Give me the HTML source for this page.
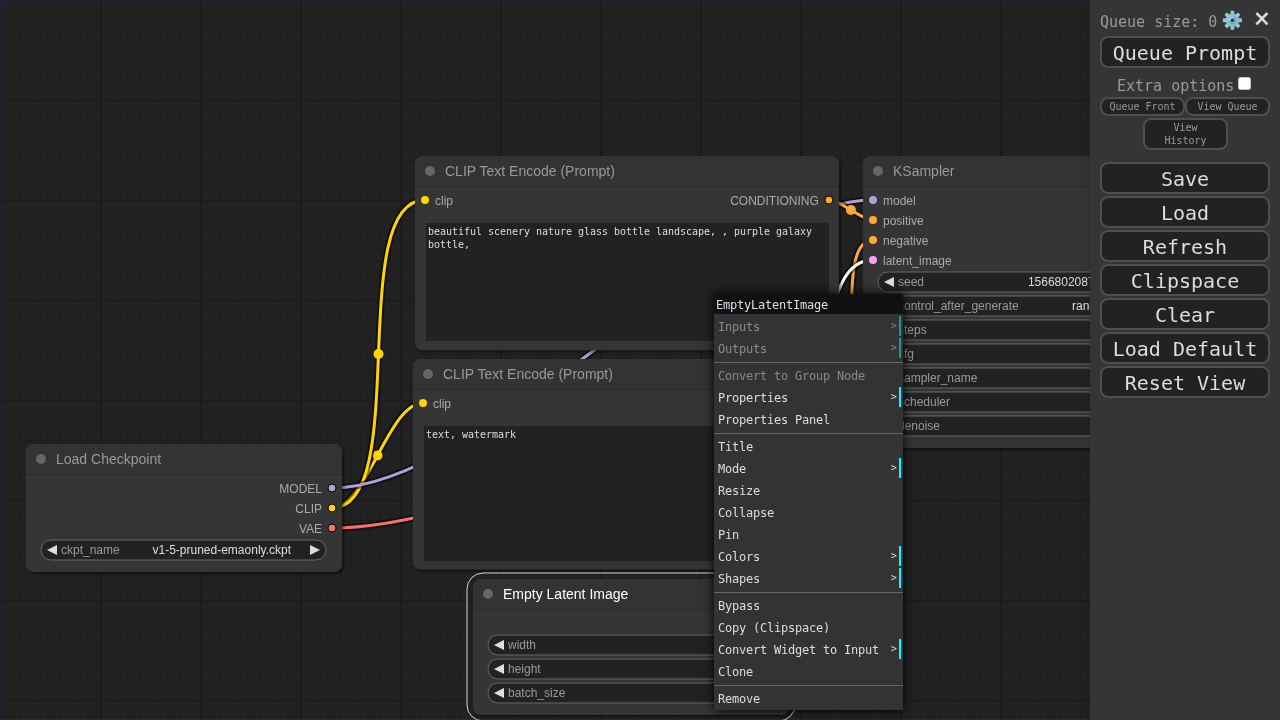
<!DOCTYPE html><html lang="en"><head><meta charset="utf-8"><title>ComfyUI</title><style>
*{box-sizing:border-box}
html,body{margin:0;padding:0;width:1280px;height:720px;overflow:hidden;background:#222222}
body{position:relative;font-family:"Liberation Sans", Arial, sans-serif}
#app{position:absolute;left:0;top:0;width:1280px;height:720px;overflow:hidden;will-change:transform}
.cv{position:absolute;left:0;top:0;display:block}
.ta{position:absolute;background:#222222;color:#dddddd;font-family:"DejaVu Sans Mono", "Liberation Mono", monospace;font-size:10px;line-height:13px;padding:2px;white-space:pre-wrap;overflow:hidden;letter-spacing:-0.02px}
.menu{position:absolute;left:1090px;top:0;width:190px;height:720px;background:#353535;color:#999999;font-family:"DejaVu Sans Mono", "Liberation Mono", monospace;font-size:15px;box-shadow:3px 3px 8px rgba(0,0,0,0.4)}
.menu>*{position:absolute}
.menu .qs{left:10px;top:12px;line-height:20px;white-space:pre}
.menu .gear{left:131px;top:9px}
.menu .close{left:164px;top:-3px;width:16px;font-size:27px;line-height:44px;color:#dddddd;font-family:"Liberation Sans", Arial, sans-serif;text-align:center;-webkit-text-stroke:0.5px #dddddd}
.btn{left:10px;width:170px;height:32px;background:#222222;border:2px solid #4e4e4e;border-radius:8px;color:#dddddd;font-size:20px;line-height:28px;text-align:center;padding:1px 0 0 0;white-space:pre}
.menu .xo{left:27px;top:76px;line-height:20px;white-space:pre}
.menu .cb{left:148px;top:77px;width:13px;height:13px;background:#fff;border:1px solid #c4c4c4;border-radius:2.5px}
.sbtn{width:85px;height:19px;background:#222222;border:2px solid #4e4e4e;border-radius:8px;color:#999999;font-size:10px;line-height:15px;text-align:center;padding:0;white-space:pre}
.sbtn.h{height:32px;line-height:13px;white-space:normal;padding:1px 6px 0 6px}
.ctx{position:absolute;left:714px;top:294px;width:189px;height:416px;background:#333333;color:#dddddd;font-family:"DejaVu Sans Mono", "Liberation Mono", monospace;font-size:12px;box-shadow:0 0 10px #000}
.ctx .t{height:20px;line-height:20px;padding:1px 2px 0 2px;letter-spacing:-0.22px;background:#111111;color:#ddddee;white-space:pre}
.ctx .e{position:relative;height:20px;line-height:20px;margin:2px 2px 0 2px;padding:1px 0 0 2px;letter-spacing:-0.22px;white-space:pre}
.ctx .e.sub{border-right:2px solid cyan}
.ctx .e.sub::after{content:">";position:absolute;top:-1px;right:2px;letter-spacing:0;font-size:10.3px}
.ctx .e.dis{opacity:0.5}
.ctx .sep{height:2px;margin:3px 0 0 0;border-top:1px solid #333333;border-bottom:1px solid #666666}
</style></head><body><div id="app">
<svg class="cv" width="1280" height="720" viewBox="0 0 1280 720">
<defs>
<pattern id="grid" width="100" height="100" patternUnits="userSpaceOnUse">
<rect width="100" height="100" fill="#222222"/>
<path d="M10.5 0V100M20.5 0V100M30.5 0V100M40.5 0V100M50.5 0V100M60.5 0V100M70.5 0V100M80.5 0V100M90.5 0V100M0 10.5H100M0 20.5H100M0 30.5H100M0 40.5H100M0 50.5H100M0 60.5H100M0 70.5H100M0 80.5H100M0 90.5H100" stroke="#1d1d1d" stroke-width="1" fill="none"/>
<path d="M1 0V100" stroke="#1b1b1b" stroke-width="2" fill="none"/><path d="M0 0.5H100" stroke="#1b1b1b" stroke-width="1" fill="none"/><path d="M0 1.5H100" stroke="#1f1f1f" stroke-width="1" fill="none"/>
</pattern>
<filter id="sh" x="-10%" y="-10%" width="125%" height="125%"><feDropShadow dx="2" dy="2" stdDeviation="1.5" flood-color="#000" flood-opacity="0.5"/></filter>
</defs>
<rect width="1280" height="720" fill="url(#grid)"/>
<rect x="0" y="0" width="1280" height="720" fill="none" stroke="#223355" stroke-width="1"/>
<g fill="none" stroke-linecap="butt">
<path d="M332 508C366.74 508 388.26 403 423 403" stroke="rgba(0,0,0,0.5)" stroke-width="7"/><path d="M332 508C366.74 508 388.26 403 423 403" stroke="#FFD500" stroke-width="3"/><circle cx="377.5" cy="455.5" r="5" fill="#FFD500"/>
<path d="M332 508C412.43 508 344.57 200 425 200" stroke="rgba(0,0,0,0.5)" stroke-width="7"/><path d="M332 508C412.43 508 344.57 200 425 200" stroke="#FFD500" stroke-width="3"/><circle cx="378.5" cy="354" r="5" fill="#FFD500"/>
<path d="M332 488C485.22 488 719.78 200 873 200" stroke="rgba(0,0,0,0.5)" stroke-width="7"/><path d="M332 488C485.22 488 719.78 200 873 200" stroke="#B39DDB" stroke-width="3"/><circle cx="602.5" cy="344" r="5" fill="#B39DDB"/>
<path d="M828.85 200C840.96 200 860.88 220 873 220" stroke="rgba(0,0,0,0.5)" stroke-width="7"/><path d="M828.85 200C840.96 200 860.88 220 873 220" stroke="#FFA931" stroke-width="3"/><circle cx="850.92" cy="210" r="5" fill="#FFA931"/>
<path d="M829.28 403C871.47 403 830.81 240 873 240" stroke="rgba(0,0,0,0.5)" stroke-width="7"/><path d="M829.28 403C871.47 403 830.81 240 873 240" stroke="#FFA931" stroke-width="3"/><circle cx="851.14" cy="321.5" r="5" fill="#FFA931"/>
<path d="M779 623C872.74 623 779.26 260 873 260" stroke="rgba(0,0,0,0.5)" stroke-width="7"/><path d="M779 623C872.74 623 779.26 260 873 260" stroke="#FFFFFF" stroke-width="3"/><circle cx="826" cy="441.5" r="5" fill="#FFFFFF"/>
<path d="M1169 200C1181.51 200 1206.49 202 1219 202" stroke="rgba(0,0,0,0.5)" stroke-width="7"/><path d="M1169 200C1181.51 200 1206.49 202 1219 202" stroke="#FF9CF9" stroke-width="3"/><circle cx="1194" cy="201" r="5" fill="#FF9CF9"/>
<path d="M332 528C566.57 528 984.43 222 1219 222" stroke="rgba(0,0,0,0.5)" stroke-width="7"/><path d="M332 528C566.57 528 984.43 222 1219 222" stroke="#FF6E6E" stroke-width="3"/><circle cx="775.5" cy="375" r="5" fill="#FF6E6E"/>
</g>
<g transform="translate(413 389)" font-family='"Liberation Sans", Arial, sans-serif'>
<path d="M8 -30H418.28A8 8 0 0 1 426.28 -22V172.61A8 8 0 0 1 418.28 180.61H8A8 8 0 0 1 0 172.61V-22A8 8 0 0 1 8 -30Z" fill="#353535" filter="url(#sh)"/>
<rect x="0" y="-1" width="426.28" height="2" fill="rgba(0,0,0,0.2)"/>
<path d="M8 -30H418.28A8 8 0 0 1 426.28 -22V0H0V-22A8 8 0 0 1 8 -30Z" fill="#333333"/>
<circle cx="15" cy="-15" r="5" fill="#666666"/>
<text x="30" y="-10" font-size="14" fill="#999999">CLIP Text Encode (Prompt)</text>
<circle cx="10" cy="14" r="4" fill="#FFD500"/><text x="20" y="19" font-size="12" fill="#AAAAAA">clip</text>
<circle cx="416.28" cy="14" r="4" fill="#FFA931" stroke="#000" stroke-width="1"/><text x="406.28" y="19" font-size="12" fill="#AAAAAA" text-anchor="end">CONDITIONING</text>
</g>
<g transform="translate(415 186)" font-family='"Liberation Sans", Arial, sans-serif'>
<path d="M8 -30H415.85A8 8 0 0 1 423.85 -22V156.31A8 8 0 0 1 415.85 164.31H8A8 8 0 0 1 0 156.31V-22A8 8 0 0 1 8 -30Z" fill="#353535" filter="url(#sh)"/>
<rect x="0" y="-1" width="423.85" height="2" fill="rgba(0,0,0,0.2)"/>
<path d="M8 -30H415.85A8 8 0 0 1 423.85 -22V0H0V-22A8 8 0 0 1 8 -30Z" fill="#333333"/>
<circle cx="15" cy="-15" r="5" fill="#666666"/>
<text x="30" y="-10" font-size="14" fill="#999999">CLIP Text Encode (Prompt)</text>
<circle cx="10" cy="14" r="4" fill="#FFD500"/><text x="20" y="19" font-size="12" fill="#AAAAAA">clip</text>
<circle cx="413.85" cy="14" r="4" fill="#FFA931" stroke="#000" stroke-width="1"/><text x="403.85" y="19" font-size="12" fill="#AAAAAA" text-anchor="end">CONDITIONING</text>
</g>
<g transform="translate(863 186)" font-family='"Liberation Sans", Arial, sans-serif'>
<path d="M8 -30H308A8 8 0 0 1 316 -22V254A8 8 0 0 1 308 262H8A8 8 0 0 1 0 254V-22A8 8 0 0 1 8 -30Z" fill="#353535" filter="url(#sh)"/>
<rect x="0" y="-1" width="316" height="2" fill="rgba(0,0,0,0.2)"/>
<path d="M8 -30H308A8 8 0 0 1 316 -22V0H0V-22A8 8 0 0 1 8 -30Z" fill="#333333"/>
<circle cx="15" cy="-15" r="5" fill="#666666"/>
<text x="30" y="-10" font-size="14" fill="#999999">KSampler</text>
<circle cx="10" cy="14" r="4" fill="#B39DDB"/><text x="20" y="19" font-size="12" fill="#AAAAAA">model</text>
<circle cx="10" cy="34" r="4" fill="#FFA931"/><text x="20" y="39" font-size="12" fill="#AAAAAA">positive</text>
<circle cx="10" cy="54" r="4" fill="#FFA931"/><text x="20" y="59" font-size="12" fill="#AAAAAA">negative</text>
<circle cx="10" cy="74" r="4" fill="#FF9CF9"/><text x="20" y="79" font-size="12" fill="#AAAAAA">latent_image</text>
<circle cx="306" cy="14" r="4" fill="#FF9CF9" stroke="#000" stroke-width="1"/><text x="296" y="19" font-size="12" fill="#AAAAAA" text-anchor="end">LATENT</text>
<rect x="15" y="86" width="285" height="20" rx="10" ry="10" fill="#222222" stroke="#666666" stroke-width="1"/>
<path d="M31 91L21 96L31 101Z" fill="#DDDDDD"/>
<path d="M284 91L294 96L284 101Z" fill="#DDDDDD"/>
<text x="35" y="100" font-size="12" fill="#999999">seed</text>
<text x="265" y="100" font-size="12" fill="#DDDDDD" text-anchor="end">156680208700286</text>
<rect x="15" y="110" width="285" height="20" rx="10" ry="10" fill="#222222" stroke="#666666" stroke-width="1"/>
<path d="M31 115L21 120L31 125Z" fill="#DDDDDD"/>
<path d="M284 115L294 120L284 125Z" fill="#DDDDDD"/>
<text x="35" y="124" font-size="12" fill="#999999">control_after_generate</text>
<text x="265" y="124" font-size="12" fill="#DDDDDD" text-anchor="end">randomize</text>
<rect x="15" y="134" width="285" height="20" rx="10" ry="10" fill="#222222" stroke="#666666" stroke-width="1"/>
<path d="M31 139L21 144L31 149Z" fill="#DDDDDD"/>
<path d="M284 139L294 144L284 149Z" fill="#DDDDDD"/>
<text x="35" y="148" font-size="12" fill="#999999">steps</text>
<text x="265" y="148" font-size="12" fill="#DDDDDD" text-anchor="end">20</text>
<rect x="15" y="158" width="285" height="20" rx="10" ry="10" fill="#222222" stroke="#666666" stroke-width="1"/>
<path d="M31 163L21 168L31 173Z" fill="#DDDDDD"/>
<path d="M284 163L294 168L284 173Z" fill="#DDDDDD"/>
<text x="35" y="172" font-size="12" fill="#999999">cfg</text>
<text x="265" y="172" font-size="12" fill="#DDDDDD" text-anchor="end">8.0</text>
<rect x="15" y="182" width="285" height="20" rx="10" ry="10" fill="#222222" stroke="#666666" stroke-width="1"/>
<path d="M31 187L21 192L31 197Z" fill="#DDDDDD"/>
<path d="M284 187L294 192L284 197Z" fill="#DDDDDD"/>
<text x="35" y="196" font-size="12" fill="#999999">sampler_name</text>
<text x="265" y="196" font-size="12" fill="#DDDDDD" text-anchor="end">euler</text>
<rect x="15" y="206" width="285" height="20" rx="10" ry="10" fill="#222222" stroke="#666666" stroke-width="1"/>
<path d="M31 211L21 216L31 221Z" fill="#DDDDDD"/>
<path d="M284 211L294 216L284 221Z" fill="#DDDDDD"/>
<text x="35" y="220" font-size="12" fill="#999999">scheduler</text>
<text x="265" y="220" font-size="12" fill="#DDDDDD" text-anchor="end">normal</text>
<rect x="15" y="230" width="285" height="20" rx="10" ry="10" fill="#222222" stroke="#666666" stroke-width="1"/>
<path d="M31 235L21 240L31 245Z" fill="#DDDDDD"/>
<path d="M284 235L294 240L284 245Z" fill="#DDDDDD"/>
<text x="35" y="244" font-size="12" fill="#999999">denoise</text>
<text x="265" y="244" font-size="12" fill="#DDDDDD" text-anchor="end">1.00</text>
</g>
<g transform="translate(26 474)" font-family='"Liberation Sans", Arial, sans-serif'>
<path d="M8 -30H308A8 8 0 0 1 316 -22V90A8 8 0 0 1 308 98H8A8 8 0 0 1 0 90V-22A8 8 0 0 1 8 -30Z" fill="#353535" filter="url(#sh)"/>
<rect x="0" y="-1" width="316" height="2" fill="rgba(0,0,0,0.2)"/>
<path d="M8 -30H308A8 8 0 0 1 316 -22V0H0V-22A8 8 0 0 1 8 -30Z" fill="#333333"/>
<circle cx="15" cy="-15" r="5" fill="#666666"/>
<text x="30" y="-10" font-size="14" fill="#999999">Load Checkpoint</text>
<circle cx="306" cy="14" r="4" fill="#B39DDB" stroke="#000" stroke-width="1"/><text x="296" y="19" font-size="12" fill="#AAAAAA" text-anchor="end">MODEL</text>
<circle cx="306" cy="34" r="4" fill="#FFD500" stroke="#000" stroke-width="1"/><text x="296" y="39" font-size="12" fill="#AAAAAA" text-anchor="end">CLIP</text>
<circle cx="306" cy="54" r="4" fill="#FF6E6E" stroke="#000" stroke-width="1"/><text x="296" y="59" font-size="12" fill="#AAAAAA" text-anchor="end">VAE</text>
<rect x="15" y="66" width="285" height="20" rx="10" ry="10" fill="#222222" stroke="#666666" stroke-width="1"/>
<path d="M31 71L21 76L31 81Z" fill="#DDDDDD"/>
<path d="M284 71L294 76L284 81Z" fill="#DDDDDD"/>
<text x="35" y="80" font-size="12" fill="#999999">ckpt_name</text>
<text x="265" y="80" font-size="12" fill="#DDDDDD" text-anchor="end">v1-5-pruned-emaonly.ckpt</text>
</g>
<g transform="translate(473 609)" font-family='"Liberation Sans", Arial, sans-serif'>
<path d="M8 -30H308A8 8 0 0 1 316 -22V98A8 8 0 0 1 308 106H8A8 8 0 0 1 0 98V-22A8 8 0 0 1 8 -30Z" fill="#353535" filter="url(#sh)"/>
<rect x="0" y="-1" width="316" height="2" fill="rgba(0,0,0,0.2)"/>
<path d="M8 -30H308A8 8 0 0 1 316 -22V0H0V-22A8 8 0 0 1 8 -30Z" fill="#333333"/>
<circle cx="15" cy="-15" r="5" fill="#666666"/>
<path d="M10 -36H306A16 16 0 0 1 322 -20V96A16 16 0 0 1 306 112H10A16 16 0 0 1 -6 96V-20A16 16 0 0 1 10 -36Z" fill="none" stroke="#FFFFFF" stroke-opacity="0.8" stroke-width="1"/>
<text x="30" y="-10" font-size="14" fill="#FFFFFF">Empty Latent Image</text>
<circle cx="306" cy="14" r="4" fill="#FF9CF9" stroke="#000" stroke-width="1"/><text x="296" y="19" font-size="12" fill="#AAAAAA" text-anchor="end">LATENT</text>
<rect x="15" y="26" width="285" height="20" rx="10" ry="10" fill="#222222" stroke="#666666" stroke-width="1"/>
<path d="M31 31L21 36L31 41Z" fill="#DDDDDD"/>
<path d="M284 31L294 36L284 41Z" fill="#DDDDDD"/>
<text x="35" y="40" font-size="12" fill="#999999">width</text>
<text x="265" y="40" font-size="12" fill="#DDDDDD" text-anchor="end">512</text>
<rect x="15" y="50" width="285" height="20" rx="10" ry="10" fill="#222222" stroke="#666666" stroke-width="1"/>
<path d="M31 55L21 60L31 65Z" fill="#DDDDDD"/>
<path d="M284 55L294 60L284 65Z" fill="#DDDDDD"/>
<text x="35" y="64" font-size="12" fill="#999999">height</text>
<text x="265" y="64" font-size="12" fill="#DDDDDD" text-anchor="end">512</text>
<rect x="15" y="74" width="285" height="20" rx="10" ry="10" fill="#222222" stroke="#666666" stroke-width="1"/>
<path d="M31 79L21 84L31 89Z" fill="#DDDDDD"/>
<path d="M284 79L294 84L284 89Z" fill="#DDDDDD"/>
<text x="35" y="88" font-size="12" fill="#999999">batch_size</text>
<text x="265" y="88" font-size="12" fill="#DDDDDD" text-anchor="end">1</text>
</g>
</svg>
<div class="ta" style="left:426px;top:223px;width:402.8px;height:118.3px">beautiful scenery nature glass bottle landscape, , purple galaxy bottle,</div>
<div class="ta" style="left:424px;top:426px;width:405.3px;height:134.6px">text, watermark</div>
<div class="ctx"><div class="t">EmptyLatentImage</div>
<div class="e sub dis">Inputs</div>
<div class="e sub dis">Outputs</div>
<div class="sep"></div>
<div class="e dis">Convert to Group Node</div>
<div class="e sub">Properties</div>
<div class="e ">Properties Panel</div>
<div class="sep"></div>
<div class="e ">Title</div>
<div class="e sub">Mode</div>
<div class="e ">Resize</div>
<div class="e ">Collapse</div>
<div class="e ">Pin</div>
<div class="e sub">Colors</div>
<div class="e sub">Shapes</div>
<div class="sep"></div>
<div class="e ">Bypass</div>
<div class="e ">Copy (Clipspace)</div>
<div class="e sub">Convert Widget to Input</div>
<div class="e ">Clone</div>
<div class="sep"></div>
<div class="e ">Remove</div>
</div>
<div class="menu"><span class="qs">Queue size: 0</span><svg class="gear" width="22" height="22" viewBox="-11.4 -11.27 22 22"><defs><linearGradient id="gg" gradientUnits="userSpaceOnUse" x1="-7" y1="-7" x2="7" y2="7"><stop offset="0" stop-color="#a0cedc"/><stop offset="1" stop-color="#74b0c6"/></linearGradient></defs><g fill="url(#gg)"><path d="M-2.2 -5.4L-1.65 -9.5H1.65L2.2 -5.4Z" transform="rotate(0)"/><path d="M-2.2 -5.4L-1.65 -9.5H1.65L2.2 -5.4Z" transform="rotate(45)"/><path d="M-2.2 -5.4L-1.65 -9.5H1.65L2.2 -5.4Z" transform="rotate(90)"/><path d="M-2.2 -5.4L-1.65 -9.5H1.65L2.2 -5.4Z" transform="rotate(135)"/><path d="M-2.2 -5.4L-1.65 -9.5H1.65L2.2 -5.4Z" transform="rotate(180)"/><path d="M-2.2 -5.4L-1.65 -9.5H1.65L2.2 -5.4Z" transform="rotate(225)"/><path d="M-2.2 -5.4L-1.65 -9.5H1.65L2.2 -5.4Z" transform="rotate(270)"/><path d="M-2.2 -5.4L-1.65 -9.5H1.65L2.2 -5.4Z" transform="rotate(315)"/><circle r="6.3"/></g><circle r="3.1" fill="none" stroke="#5fa9c1" stroke-width="1.3"/><path d="M-2.9 0.6A3 3 0 0 1 0.6 -2.9" fill="none" stroke="#d8eef4" stroke-width="1"/><circle r="1.7" fill="#2b2f31"/></svg><span class="close">×</span>
<div class="btn" style="top:36px">Queue Prompt</div>
<span class="xo">Extra options</span><i class="cb"></i>
<div class="sbtn" style="left:10px;top:97px">Queue Front</div><div class="sbtn" style="left:95px;top:97px">View Queue</div>
<div class="sbtn h" style="left:53px;top:118px">View History</div>
<div class="btn" style="top:162px">Save</div>
<div class="btn" style="top:196px">Load</div>
<div class="btn" style="top:230px">Refresh</div>
<div class="btn" style="top:264px">Clipspace</div>
<div class="btn" style="top:298px">Clear</div>
<div class="btn" style="top:332px">Load Default</div>
<div class="btn" style="top:366px">Reset View</div>
</div>
</div></body></html>
